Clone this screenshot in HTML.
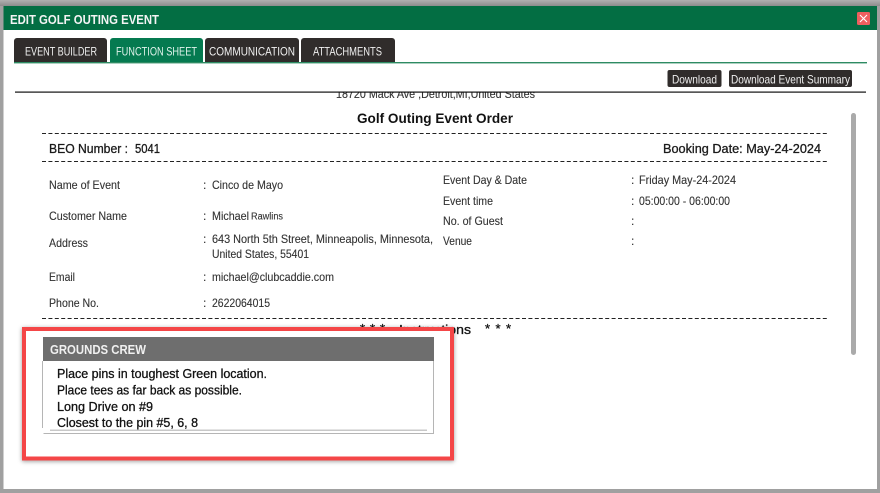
<!DOCTYPE html>
<html><head><meta charset="utf-8"><style>
html,body{margin:0;padding:0;width:880px;height:493px;overflow:hidden;background:#a0a0a0}
svg{display:block;font-family:"Liberation Sans",sans-serif}
.t{font-size:12px;fill:#333;stroke:#333;stroke-width:.12}
.b{font-weight:bold;fill:#111}
</style></head><body>
<svg width="880" height="493" viewBox="0 0 880 493" xmlns="http://www.w3.org/2000/svg">
<defs>
<linearGradient id="g" x1="0" y1="0" x2="0" y2="1"><stop offset="0" stop-color="#b0b0b0"/><stop offset="1" stop-color="#8c8c8c"/></linearGradient>
<filter id="s" x="-5%" y="-5%" width="110%" height="112%"><feGaussianBlur stdDeviation="2"/></filter>
</defs>
<rect x="0" y="0" width="880" height="6" fill="url(#g)"/>
<rect x="3.5" y="6" width="873.5" height="483" fill="#fff"/>
<rect x="3.5" y="6" width="873.5" height="24" fill="#036e43"/>
<text x="10" y="24" font-size="13" font-weight="bold" fill="#f4f4f4" textLength="149" lengthAdjust="spacingAndGlyphs">EDIT GOLF OUTING EVENT</text>
<rect x="857" y="12" width="13" height="13" rx="1.5" fill="#ee5f5f"/>
<path d="M860 15L867 22M867 15L860 22" stroke="#fff" stroke-width="1.1"/>

<path d="M14 62V41a3 3 0 0 1 3-3h87a3 3 0 0 1 3 3v21z" fill="#302c2b"/>
<path d="M110 62V41a3 3 0 0 1 3-3h87a3 3 0 0 1 3 3v21z" fill="#057a50"/>
<path d="M205 62V41a3 3 0 0 1 3-3h88a3 3 0 0 1 3 3v21z" fill="#302c2b"/>
<path d="M301 62V41a3 3 0 0 1 3-3h88a3 3 0 0 1 3 3v21z" fill="#302c2b"/>
<rect x="14" y="62" width="853" height="1.4" fill="#2e8b63"/>
<g font-size="12" fill="#f0f0f0">
<text x="25" y="55.5" textLength="72" lengthAdjust="spacingAndGlyphs">EVENT BUILDER</text>
<text x="116" y="55.5" textLength="81" lengthAdjust="spacingAndGlyphs" fill="#dff2ea">FUNCTION SHEET</text>
<text x="209" y="55.5" textLength="86" lengthAdjust="spacingAndGlyphs">COMMUNICATION</text>
<text x="313" y="55.5" textLength="69" lengthAdjust="spacingAndGlyphs">ATTACHMENTS</text>
</g>
<rect x="667.5" y="70" width="54" height="17" rx="2" fill="#302c2b"/>
<rect x="729" y="70" width="123" height="17" rx="2" fill="#302c2b"/>
<g font-size="12" fill="#eee">
<text x="672" y="83.5" textLength="45" lengthAdjust="spacingAndGlyphs">Download</text>
<text x="731" y="83.5" textLength="119" lengthAdjust="spacingAndGlyphs">Download Event Summary</text>
</g>

<text class="t" x="336" y="98" textLength="199" lengthAdjust="spacingAndGlyphs">18720 Mack Ave ,Detroit,MI,United States</text>
<rect x="15" y="88" width="851" height="4" fill="#fff"/>
<rect x="15" y="91.5" width="851" height="1.2" fill="#111"/>
<rect x="851" y="113" width="5" height="242" rx="2.5" fill="#aaa"/>

<text class="b" x="357" y="123" font-size="14" textLength="156" lengthAdjust="spacingAndGlyphs">Golf Outing Event Order</text>
<g stroke="#222" stroke-width="1" stroke-dasharray="4 2.4">
<path d="M42 133.5H827M42 161.5H827M42 318.5H827"/>
</g>
<g font-size="13" fill="#1a1a1a" stroke="#1a1a1a" stroke-width=".3">
<text x="49" y="153" textLength="79" lengthAdjust="spacingAndGlyphs">BEO Number :</text>
<text x="135" y="153" textLength="25" lengthAdjust="spacingAndGlyphs">5041</text>
<text x="663" y="153" textLength="158" lengthAdjust="spacingAndGlyphs">Booking Date: May-24-2024</text>
</g>

<g>
<text class="t" x="49" y="189" textLength="71" lengthAdjust="spacingAndGlyphs">Name of Event</text>
<text class="t" x="203" y="189">:</text>
<text class="t" x="212" y="189" textLength="71" lengthAdjust="spacingAndGlyphs">Cinco de Mayo</text>
<text class="t" x="49" y="220" textLength="78" lengthAdjust="spacingAndGlyphs">Customer Name</text>
<text class="t" x="203" y="220">:</text>
<text class="t" x="212" y="220" textLength="37" lengthAdjust="spacingAndGlyphs">Michael</text>
<text class="t" x="251" y="219.5" style="font-size:10px" textLength="32" lengthAdjust="spacingAndGlyphs">Rawlins</text>
<text class="t" x="49" y="247" textLength="39" lengthAdjust="spacingAndGlyphs">Address</text>
<text class="t" x="203" y="243">:</text>
<text class="t" x="212" y="243" textLength="221" lengthAdjust="spacingAndGlyphs">643 North 5th Street, Minneapolis, Minnesota,</text>
<text class="t" x="212" y="258" textLength="97" lengthAdjust="spacingAndGlyphs">United States, 55401</text>
<text class="t" x="49" y="281" textLength="26" lengthAdjust="spacingAndGlyphs">Email</text>
<text class="t" x="203" y="281">:</text>
<text class="t" x="212" y="281" textLength="122" lengthAdjust="spacingAndGlyphs">michael@clubcaddie.com</text>
<text class="t" x="49" y="307" textLength="50" lengthAdjust="spacingAndGlyphs">Phone No.</text>
<text class="t" x="203" y="307">:</text>
<text class="t" x="212" y="307" textLength="58" lengthAdjust="spacingAndGlyphs">2622064015</text>

<text class="t" x="443" y="184" textLength="84" lengthAdjust="spacingAndGlyphs">Event Day &amp; Date</text>
<text class="t" x="631" y="184">:</text>
<text class="t" x="639" y="184" textLength="97" lengthAdjust="spacingAndGlyphs">Friday May-24-2024</text>
<text class="t" x="443" y="205" textLength="50" lengthAdjust="spacingAndGlyphs">Event time</text>
<text class="t" x="631" y="205">:</text>
<text class="t" x="639" y="205" textLength="91" lengthAdjust="spacingAndGlyphs">05:00:00 - 06:00:00</text>
<text class="t" x="443" y="225" textLength="60" lengthAdjust="spacingAndGlyphs">No. of Guest</text>
<text class="t" x="631" y="225">:</text>
<text class="t" x="443" y="245" textLength="29" lengthAdjust="spacingAndGlyphs">Venue</text>
<text class="t" x="631" y="245">:</text>
</g>

<g font-size="13" fill="#111" stroke="#111" stroke-width=".3">
<text x="360" y="333" textLength="25" lengthAdjust="spacing">* * *</text>
<text x="399" y="334" textLength="72" lengthAdjust="spacingAndGlyphs">Instructions</text>
<text x="485" y="333" textLength="26" lengthAdjust="spacing">* * *</text>
</g>

<rect x="24" y="329" width="428" height="129.5" fill="none" stroke="#000" stroke-opacity=".4" stroke-width="4" filter="url(#s)" transform="translate(0 1)"/>
<rect x="26" y="331" width="424" height="125.5" fill="#fff"/>
<rect x="24" y="329" width="428" height="129.5" fill="none" stroke="#f44647" stroke-width="4"/>

<rect x="43" y="337" width="391" height="24" fill="#6e6e6e"/>
<text x="50" y="354" font-size="13" font-weight="bold" fill="#f0f0f0" textLength="96" lengthAdjust="spacingAndGlyphs">GROUNDS CREW</text>
<path d="M42.5 361V428M433.5 361V434M43.5 433.5H434" stroke="#b5b5b5" stroke-width="1" fill="none"/>
<g font-size="13" fill="#111" stroke="#111" stroke-width=".3">
<text x="57" y="378" textLength="210" lengthAdjust="spacingAndGlyphs">Place pins in toughest Green location.</text>
<text x="57" y="394.5" textLength="185" lengthAdjust="spacingAndGlyphs">Place tees as far back as possible.</text>
<text x="57" y="411" textLength="96" lengthAdjust="spacingAndGlyphs">Long Drive on #9</text>
<text x="57" y="427" textLength="141" lengthAdjust="spacingAndGlyphs">Closest to the pin #5, 6, 8</text>
</g>
<rect x="50" y="429.5" width="377" height="1.5" fill="#c8c8c8"/>
</svg>
</body></html>
